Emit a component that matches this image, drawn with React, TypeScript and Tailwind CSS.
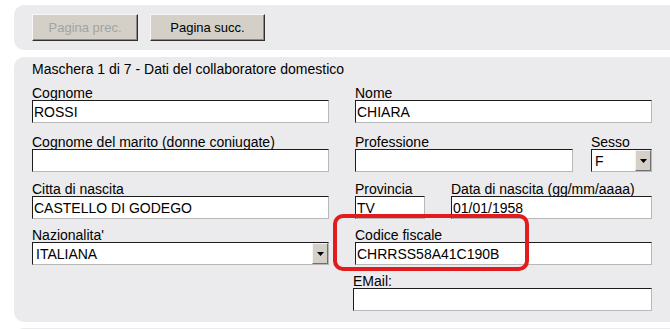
import type { ReactNode } from "react";

function Label({ children }: { children: ReactNode }) {
    return <div className="h-[14px] leading-[14px] text-[14px] whitespace-nowrap">{children}</div>;
}

function Box({ value, className = "" }: { value?: string; className?: string }) {
    return (
        <div
            className={`h-[23px] bg-white border border-t-[#1c1c1c] border-l-[#1c1c1c] border-r-[#b8b8b8] border-b-[#b8b8b8] flex items-center pl-[1px] text-[14px] leading-[14px] whitespace-nowrap overflow-hidden ${className}`}
        >
            {value}
        </div>
    );
}

function Select({ value, className = "" }: { value: string; className?: string }) {
    return (
        <div
            className={`h-[23px] bg-white border border-t-[#1c1c1c] border-l-[#1c1c1c] border-r-[#b8b8b8] border-b-[#b8b8b8] flex items-stretch text-[14px] leading-[14px] ${className}`}
        >
            <div className="flex-1 flex items-center pl-[3px] whitespace-nowrap overflow-hidden">{value}</div>
            <div className="w-[16px] bg-[#d4d0c8] border border-t-[#f4f4f4] border-l-[#f4f4f4] border-r-[#6f6f6f] border-b-[#6f6f6f] flex items-center justify-center">
                <svg width="7" height="4" viewBox="0 0 7 4">
                    <path d="M0 0h7L3.5 4z" fill="#000" />
                </svg>
            </div>
        </div>
    );
}

function Field({ label, children, className = "" }: { label: string; children: ReactNode; className?: string }) {
    return (
        <div className={`flex flex-col ${className}`}>
            <Label>{label}</Label>
            {children}
        </div>
    );
}

function Button({ children, disabled, className = "" }: { children: ReactNode; disabled?: boolean; className?: string }) {
    return (
        <div
            className={`h-[27px] flex items-center justify-center bg-[#d4d0c8] border border-t-[#f7f7f7] border-l-[#f7f7f7] border-r-[#303030] border-b-[#303030] shadow-[inset_-1px_-1px_0_#8a8a8a] text-[13px] ${
                disabled ? "text-[#a3a3a3]" : "text-black"
            } ${className}`}
        >
            {children}
        </div>
    );
}

export default function App() {
    return (
        <div className="h-screen overflow-hidden bg-white pt-[5px] pl-[14px] text-black font-['Liberation_Sans',Arial,sans-serif]">
            <div className="h-[45px] bg-[#ebebed] rounded-l-[10px] pl-[18px] flex items-center gap-[12px]">
                <Button disabled className="w-[106px]">
                    Pagina prec.
                </Button>
                <Button className="w-[115px]">Pagina succ.</Button>
            </div>

            <div className="relative mt-[7px] h-[265px] bg-[#ebebed] rounded-l-[10px] pl-[18px] pt-[5px]">
                <Label>Maschera 1 di 7 - Dati del collaboratore domestico</Label>

                <div className="mt-[10px] flex gap-[26px]">
                    <div className="w-[297px] flex flex-col">
                        <Field label="Cognome">
                            <Box value="ROSSI" />
                        </Field>
                        <Field label="Cognome del marito (donne coniugate)" className="mt-[12px]">
                            <Box />
                        </Field>
                        <Field label="Citta di nascita" className="mt-[10px]">
                            <Box value="CASTELLO DI GODEGO" />
                        </Field>
                        <Field label="Nazionalita'" className="mt-[9px]">
                            <Select value="ITALIANA" />
                        </Field>
                    </div>

                    <div className="w-[297px] flex flex-col">
                        <Field label="Nome">
                            <Box value="CHIARA" />
                        </Field>
                        <div className="mt-[12px] flex gap-[18px]">
                            <Field label="Professione" className="w-[218px]">
                                <Box />
                            </Field>
                            <Field label="Sesso" className="w-[61px]">
                                <Select value="F" />
                            </Field>
                        </div>
                        <div className="mt-[10px] flex gap-[26px]">
                            <Field label="Provincia" className="w-[70px]">
                                <Box value="TV" />
                            </Field>
                            <Field label="Data di nascita (gg/mm/aaaa)" className="w-[201px]">
                                <Box value="01/01/1958" />
                            </Field>
                        </div>
                        <Field label="Codice fiscale" className="mt-[9px]">
                            <Box value="CHRRSS58A41C190B" />
                        </Field>
                        <Field label="EMail:" className="mt-[9px] ml-[-2px]">
                            <Box />
                        </Field>
                    </div>
                </div>

                <div className="absolute left-[319px] top-[157px] w-[196px] h-[57px] border-[4px] border-[#e11b1e] rounded-[10px] z-10" />
            </div>

            <div className="mt-[6px] h-[20px] bg-[#ebebed] rounded-tl-[10px]" />
        </div>
    );
}
